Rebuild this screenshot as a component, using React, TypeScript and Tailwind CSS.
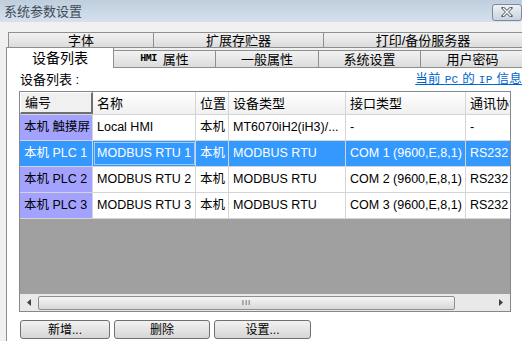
import React from 'react';

const font = "font-['Liberation_Sans','Noto_Sans_CJK_SC',sans-serif]";

const cols = [
  { key: 'id', label: '编号', w: 'w-[73px]' },
  { key: 'name', label: '名称', w: 'w-[103px]' },
  { key: 'pos', label: '位置', w: 'w-[33px]' },
  { key: 'type', label: '设备类型', w: 'w-[117px]' },
  { key: 'port', label: '接口类型', w: 'w-[120px]' },
  { key: 'proto', label: '通讯协议', w: 'w-[70px]' },
];

const rows = [
  { id: '本机 触摸屏', name: 'Local HMI', pos: '本机', type: 'MT6070iH2(iH3)/...', port: '-', proto: '-' },
  { id: '本机 PLC 1', name: 'MODBUS RTU 1', pos: '本机', type: 'MODBUS RTU', port: 'COM 1 (9600,E,8,1)', proto: 'RS232', selected: true },
  { id: '本机 PLC 2', name: 'MODBUS RTU 2', pos: '本机', type: 'MODBUS RTU', port: 'COM 2 (9600,E,8,1)', proto: 'RS232' },
  { id: '本机 PLC 3', name: 'MODBUS RTU 3', pos: '本机', type: 'MODBUS RTU', port: 'COM 3 (9600,E,8,1)', proto: 'RS232' },
];

function TopTab({ label, w }: { label: string; w: string }) {
  return (
    <div className={`${w} h-[16px] shrink-0 border border-[#8e8f8f] bg-gradient-to-b from-[#f2f2f2] to-[#dcdcdc] flex items-center justify-center text-[13px] leading-none text-black -ml-px first:ml-0`}>
      {label}
    </div>
  );
}

function LowTab({ children, w }: { children: React.ReactNode; w: string }) {
  return (
    <div className={`${w} h-[17px] mt-[3px] shrink-0 border border-[#8e8f8f] border-b-0 bg-gradient-to-b from-[#f2f2f2] to-[#dcdcdc] flex items-center justify-center text-[13px] leading-none text-black -ml-px`}>
      {children}
    </div>
  );
}

function Btn({ label, w }: { label: string; w: string }) {
  return (
    <div className={`${w} h-[19px] rounded-[3px] border border-[#707070] bg-gradient-to-b from-[#f2f2f2] to-[#d6d6d6] flex items-center justify-center text-[12px] text-black leading-none`}>
      {label}
    </div>
  );
}

export default function App() {
  return (
    <div className={`w-[522px] h-[341px] overflow-hidden bg-[#f0f0f0] ${font} flex flex-col`}>
      {/* title bar */}
      <div className="h-[22px] shrink-0 bg-gradient-to-b from-[#bfcedd] to-[#d5e1ed] flex items-center justify-between pl-[4px]">
        <span className="text-[13px] text-[#3f4b58] leading-none">系统参数设置</span>
        <div className="w-[30px] h-[17px] mt-[2px] rounded-[3px] border border-[#7d8a99] bg-gradient-to-b from-[#eef2f6] to-[#c9d3de] flex items-center justify-center">
          <svg width="12" height="10" viewBox="0 0 12 10">
            <path d="M2 1 L10 9 M10 1 L2 9" stroke="#4b5560" strokeWidth="3" strokeLinecap="square" />
            <path d="M2 1 L10 9 M10 1 L2 9" stroke="#ffffff" strokeWidth="1.4" />
          </svg>
        </div>
      </div>

      {/* tab rows */}
      <div className="mt-[10px] pl-[8px] flex shrink-0">
        <TopTab label="字体" w="w-[146px]" />
        <TopTab label="扩展存贮器" w="w-[171px]" />
        <TopTab label="打印/备份服务器" w="w-[200px]" />
      </div>
      <div className="pl-[6px] flex shrink-0 h-[20px] -mt-px relative z-10">
        <div className="w-[108px] h-[21px] shrink-0 bg-white border border-[#8e8f8f] border-b-0 flex items-center justify-center text-[14px] leading-none">
          设备列表
        </div>
        <LowTab w="w-[103px]">
          <span className="font-['Liberation_Mono',monospace] text-[10px] font-bold mr-[6px] tracking-[-0.5px]">HMI</span>
          <span>属性</span>
        </LowTab>
        <LowTab w="w-[104px]">一般属性</LowTab>
        <LowTab w="w-[103px]">系统设置</LowTab>
        <LowTab w="w-[105px]">用户密码</LowTab>
      </div>

      {/* panel */}
      <div className="ml-[6px] flex-1 bg-white border-l border-t border-[#8e8f8f] pl-[12px] pr-[10px]">
        <div className="h-[23px] flex items-center justify-between">
          <span className="text-[13px] leading-none ml-px">设备列表 :</span>
          <span className="text-[12.5px] leading-none text-[#0066cc] underline mr-[-10px] tracking-[0.3px]">
            当前 <span className="font-['Liberation_Mono',monospace] text-[11px]">PC</span> 的{' '}
            <span className="font-['Liberation_Mono',monospace] text-[11px]">IP</span> 信息
          </span>
        </div>

        {/* grid */}
        <div className="w-[492px] border border-[#828790] overflow-hidden">
          <div className="flex h-[23px] bg-gradient-to-b from-[#ffffff] to-[#f0f0f0] border-b border-[#d5d5d5]">
            {cols.map((c, i) => (
              <div
                key={c.key}
                className={`${c.w} shrink-0 flex items-center pl-[4px] text-[13px] leading-none whitespace-nowrap ${
                  i === 0
                    ? 'border-t border-l border-white border-r-2 border-b-2 border-r-[#6f6f6f] border-b-[#6f6f6f] bg-[#f0f0f0]'
                    : 'border-r border-[#d5d5d5]'
                }`}
              >
                {c.label}
              </div>
            ))}
          </div>
          {rows.map((r, ri) => (
            <div key={ri} className="flex h-[26px] border-b border-[#d5d5d5]">
              {cols.map((c, i) => {
                const value = (r as Record<string, string | boolean | undefined>)[c.key] as string;
                let cls = 'bg-white text-black';
                if (r.selected) cls = 'bg-[#3399ff] text-white';
                else if (i === 0) cls = 'bg-[#a3a3ff] text-black';
                const focus = r.selected && i === 1 ? 'outline outline-1 -outline-offset-2 outline-[#9ccaf9]' : '';
                return (
                  <div
                    key={c.key}
                    className={`${c.w} shrink-0 flex items-center pl-[4px] text-[12.5px] leading-none whitespace-nowrap overflow-hidden border-r border-[#d5d5d5] ${cls} ${focus}`}
                  >
                    {value}
                  </div>
                );
              })}
            </div>
          ))}
          <div className="h-[75px] bg-[#a0a0a0]" />
          {/* horizontal scrollbar */}
          <div className="h-[17px] bg-[#e9e9e9] flex items-center">
            <div className="w-[18px] flex justify-center">
              <svg width="4" height="7" viewBox="0 0 4 7"><path d="M4 0 L0 3.5 L4 7 Z" fill="#404040" /></svg>
            </div>
            <div className="w-[417px] h-[14px] rounded-[2px] border border-[#8e8e8e] bg-gradient-to-b from-[#f5f5f5] to-[#d8d8d8] flex items-center justify-center">
              <span className="text-[8px] leading-none text-[#555] font-['Liberation_Sans',sans-serif] tracking-[1px]">III</span>
            </div>
            <div className="flex-1 flex justify-end pr-[7px]">
              <svg width="4" height="7" viewBox="0 0 4 7"><path d="M0 0 L4 3.5 L0 7 Z" fill="#404040" /></svg>
            </div>
          </div>
        </div>

        {/* buttons */}
        <div className="flex gap-[4px] mt-[8px] ml-px">
          <Btn label="新增..." w="w-[90px]" />
          <Btn label="删除" w="w-[96px]" />
          <Btn label="设置..." w="w-[97px]" />
        </div>
      </div>
    </div>
  );
}
